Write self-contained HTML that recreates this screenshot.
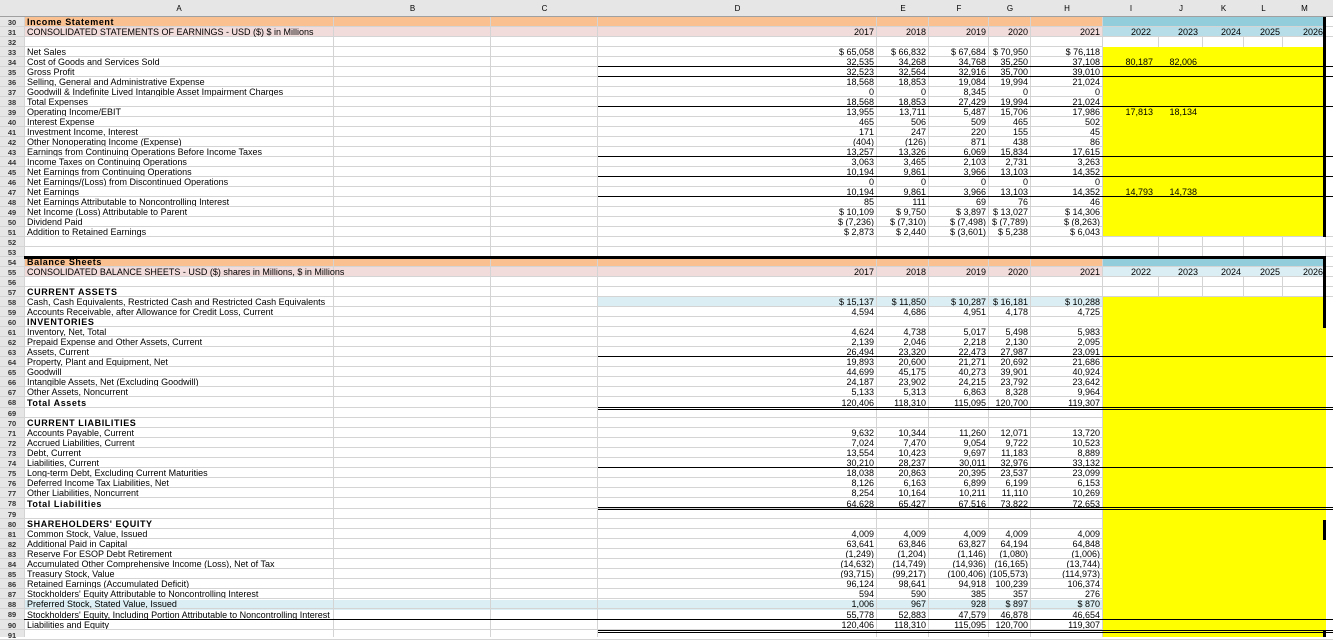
<!DOCTYPE html>
<html><head><meta charset="utf-8">
<style>
*{margin:0;padding:0;box-sizing:border-box}
body{width:1333px;height:637px;overflow:hidden;background:#fff;font-family:"Liberation Sans",Arial,sans-serif;font-size:9px;color:#000;position:relative}
.f{position:absolute}
.v{position:absolute;top:0;width:1px;height:637px;background:#d4d4d4}
.hd{position:absolute;top:0;left:0;width:1333px;height:17px;background:#e6e6e6;border-bottom:1px solid #a0a0a0}
.hd span{position:absolute;top:4px;font-size:8px;text-align:center}
.rows{position:absolute;top:17px;left:0;width:1333px}
.r{display:grid;grid-template-columns:24px 310px 157px 107px 279px 52px 60px 42px 72px 56px 44px 41px 39px 43px 7px;height:10px;line-height:9px;padding-top:1px;border-bottom:1px solid #d4d4d4;position:relative}
.r.t{height:11px;line-height:10px}
.r.y{border-bottom-color:transparent}
.r.y::after{content:"";position:absolute;left:0;bottom:-1px;width:1103px;height:1px;background:#d4d4d4}
.r>*{white-space:nowrap;text-align:right;padding-right:3px;font-style:normal;text-decoration:none;font-weight:normal;overflow:visible}
.r>i{text-align:center;font-size:7.5px;padding:0;font-weight:bold;color:#333}
.r>u{text-align:left;padding-left:3px}
.r>u.b{font-weight:900;letter-spacing:.6px}
.k{position:absolute;background:#000;height:1px;z-index:3}
</style></head><body>
<div class="f" style="left:0;top:0;width:24px;height:637px;background:#e6e6e6"></div>
<div class="f" style="left:24px;top:17px;width:1079px;height:10px;background:#fac090"></div>
<div class="f" style="left:1103px;top:17px;width:223px;height:10px;background:#92cddc"></div>
<div class="f" style="left:24px;top:27px;width:1079px;height:10px;background:#f2dcdb"></div>
<div class="f" style="left:1103px;top:27px;width:223px;height:10px;background:#b7dee8"></div>
<div class="f" style="left:1103px;top:47px;width:223px;height:190px;background:#ffff00"></div>
<div class="f" style="left:24px;top:257px;width:1079px;height:10px;background:#fac090"></div>
<div class="f" style="left:1103px;top:257px;width:223px;height:10px;background:#92cddc"></div>
<div class="f" style="left:24px;top:267px;width:1079px;height:10px;background:#f2dcdb"></div>
<div class="f" style="left:1103px;top:267px;width:223px;height:10px;background:#daeef3"></div>
<div class="f" style="left:598px;top:297px;width:505px;height:10px;background:#daeef3"></div>
<div class="f" style="left:24px;top:600px;width:1079px;height:10px;background:#daeef3"></div>
<div class="v" style="left:24px"></div><div class="v" style="left:333px"></div><div class="v" style="left:490px"></div><div class="v" style="left:597px"></div><div class="v" style="left:876px"></div><div class="v" style="left:928px"></div><div class="v" style="left:988px"></div><div class="v" style="left:1030px"></div><div class="v" style="left:1102px"></div><div class="v" style="left:1158px;top:37px;height:10px"></div><div class="v" style="left:1202px;top:37px;height:10px"></div><div class="v" style="left:1243px;top:37px;height:10px"></div><div class="v" style="left:1282px;top:37px;height:10px"></div><div class="v" style="left:1158px;top:237px;height:20px"></div><div class="v" style="left:1202px;top:237px;height:20px"></div><div class="v" style="left:1243px;top:237px;height:20px"></div><div class="v" style="left:1282px;top:237px;height:20px"></div><div class="v" style="left:1158px;top:277px;height:20px"></div><div class="v" style="left:1202px;top:277px;height:20px"></div><div class="v" style="left:1243px;top:277px;height:20px"></div><div class="v" style="left:1282px;top:277px;height:20px"></div><div class="v" style="left:1325px"></div>
<div class="f" style="left:1103px;top:297px;width:223px;height:340px;background:#ffff00"></div>
<div class="hd">
<span style="left:24px;width:310px">A</span><span style="left:334px;width:157px">B</span><span style="left:491px;width:107px">C</span><span style="left:598px;width:279px">D</span><span style="left:877px;width:52px">E</span><span style="left:929px;width:60px">F</span><span style="left:989px;width:42px">G</span><span style="left:1031px;width:72px">H</span><span style="left:1103px;width:56px">I</span><span style="left:1159px;width:44px">J</span><span style="left:1203px;width:41px">K</span><span style="left:1244px;width:39px">L</span><span style="left:1283px;width:43px">M</span>
</div>
<div class="rows">
<div class="r"><i>30</i><u class="b">Income Statement</u></div>
<div class="r"><i>31</i><u>CONSOLIDATED STATEMENTS OF EARNINGS - USD ($) $ in Millions</u><span></span><span></span><span>2017</span><span>2018</span><span>2019</span><span>2020</span><span>2021</span><span style="padding-right:8px">2022</span><span style="padding-right:5px">2023</span><span>2024</span><span>2025</span><span>2026</span></div>
<div class="r y"><i>32</i></div>
<div class="r y"><i>33</i><u>Net Sales</u><span></span><span></span><span>$ 65,058</span><span>$ 66,832</span><span>$ 67,684</span><span>$ 70,950</span><span>$ 76,118</span></div>
<div class="r y"><i>34</i><u>Cost of Goods and Services Sold</u><span></span><span></span><span>32,535</span><span>34,268</span><span>34,768</span><span>35,250</span><span>37,108</span><span style="padding-right:6px">80,187</span><span style="padding-right:6px">82,006</span></div>
<div class="r y"><i>35</i><u>Gross Profit</u><span></span><span></span><span>32,523</span><span>32,564</span><span>32,916</span><span>35,700</span><span>39,010</span></div>
<div class="r y"><i>36</i><u>Selling, General and Administrative Expense</u><span></span><span></span><span>18,568</span><span>18,853</span><span>19,084</span><span>19,994</span><span>21,024</span></div>
<div class="r y"><i>37</i><u>Goodwill &amp; Indefinite Lived Intangible Asset Impairment Charges</u><span></span><span></span><span>0</span><span>0</span><span>8,345</span><span>0</span><span>0</span></div>
<div class="r y"><i>38</i><u>Total Expenses</u><span></span><span></span><span>18,568</span><span>18,853</span><span>27,429</span><span>19,994</span><span>21,024</span></div>
<div class="r y"><i>39</i><u>Operating Income/EBIT</u><span></span><span></span><span>13,955</span><span>13,711</span><span>5,487</span><span>15,706</span><span>17,986</span><span style="padding-right:6px">17,813</span><span style="padding-right:6px">18,134</span></div>
<div class="r y"><i>40</i><u>Interest Expense</u><span></span><span></span><span>465</span><span>506</span><span>509</span><span>465</span><span>502</span></div>
<div class="r y"><i>41</i><u>Investment Income, Interest</u><span></span><span></span><span>171</span><span>247</span><span>220</span><span>155</span><span>45</span></div>
<div class="r y"><i>42</i><u>Other Nonoperating Income (Expense)</u><span></span><span></span><span>(404)</span><span>(126)</span><span>871</span><span>438</span><span>86</span></div>
<div class="r y"><i>43</i><u>Earnings from Continuing Operations Before Income Taxes</u><span></span><span></span><span>13,257</span><span>13,326</span><span>6,069</span><span>15,834</span><span>17,615</span></div>
<div class="r y"><i>44</i><u>Income Taxes on Continuing Operations</u><span></span><span></span><span>3,063</span><span>3,465</span><span>2,103</span><span>2,731</span><span>3,263</span></div>
<div class="r y"><i>45</i><u>Net Earnings from Continuing Operations</u><span></span><span></span><span>10,194</span><span>9,861</span><span>3,966</span><span>13,103</span><span>14,352</span></div>
<div class="r y"><i>46</i><u>Net Earnings/(Loss) from Discontinued Operations</u><span></span><span></span><span>0</span><span>0</span><span>0</span><span>0</span><span>0</span></div>
<div class="r y"><i>47</i><u>Net Earnings</u><span></span><span></span><span>10,194</span><span>9,861</span><span>3,966</span><span>13,103</span><span>14,352</span><span style="padding-right:6px">14,793</span><span style="padding-right:6px">14,738</span></div>
<div class="r y"><i>48</i><u>Net Earnings Attributable to Noncontrolling Interest</u><span></span><span></span><span>85</span><span>111</span><span>69</span><span>76</span><span>46</span></div>
<div class="r y"><i>49</i><u>Net Income (Loss) Attributable to Parent</u><span></span><span></span><span>$ 10,109</span><span>$ 9,750</span><span>$ 3,897</span><span>$ 13,027</span><span>$ 14,306</span></div>
<div class="r y"><i>50</i><u>Dividend Paid</u><span></span><span></span><span>$ (7,236)</span><span>$ (7,310)</span><span>$ (7,498)</span><span>$ (7,789)</span><span>$ (8,263)</span></div>
<div class="r"><i>51</i><u>Addition to Retained Earnings</u><span></span><span></span><span>$ 2,873</span><span>$ 2,440</span><span>$ (3,601)</span><span>$ 5,238</span><span>$ 6,043</span></div>
<div class="r"><i>52</i></div>
<div class="r"><i>53</i></div>
<div class="r"><i>54</i><u class="b">Balance Sheets</u></div>
<div class="r"><i>55</i><u>CONSOLIDATED BALANCE SHEETS - USD ($) shares in Millions, $ in Millions</u><span></span><span></span><span>2017</span><span>2018</span><span>2019</span><span>2020</span><span>2021</span><span style="padding-right:8px">2022</span><span style="padding-right:5px">2023</span><span>2024</span><span>2025</span><span>2026</span></div>
<div class="r"><i>56</i></div>
<div class="r"><i>57</i><u class="b">CURRENT ASSETS</u></div>
<div class="r y"><i>58</i><u>Cash, Cash Equivalents, Restricted Cash and Restricted Cash Equivalents</u><span></span><span></span><span>$ 15,137</span><span>$ 11,850</span><span>$ 10,287</span><span>$ 16,181</span><span>$ 10,288</span></div>
<div class="r y"><i>59</i><u>Accounts Receivable, after Allowance for Credit Loss, Current</u><span></span><span></span><span>4,594</span><span>4,686</span><span>4,951</span><span>4,178</span><span>4,725</span></div>
<div class="r y"><i>60</i><u class="b">INVENTORIES</u></div>
<div class="r y"><i>61</i><u>Inventory, Net, Total</u><span></span><span></span><span>4,624</span><span>4,738</span><span>5,017</span><span>5,498</span><span>5,983</span></div>
<div class="r y"><i>62</i><u>Prepaid Expense and Other Assets, Current</u><span></span><span></span><span>2,139</span><span>2,046</span><span>2,218</span><span>2,130</span><span>2,095</span></div>
<div class="r y"><i>63</i><u>Assets, Current</u><span></span><span></span><span>26,494</span><span>23,320</span><span>22,473</span><span>27,987</span><span>23,091</span></div>
<div class="r y"><i>64</i><u>Property, Plant and Equipment, Net</u><span></span><span></span><span>19,893</span><span>20,600</span><span>21,271</span><span>20,692</span><span>21,686</span></div>
<div class="r y"><i>65</i><u>Goodwill</u><span></span><span></span><span>44,699</span><span>45,175</span><span>40,273</span><span>39,901</span><span>40,924</span></div>
<div class="r y"><i>66</i><u>Intangible Assets, Net (Excluding Goodwill)</u><span></span><span></span><span>24,187</span><span>23,902</span><span>24,215</span><span>23,792</span><span>23,642</span></div>
<div class="r y"><i>67</i><u>Other Assets, Noncurrent</u><span></span><span></span><span>5,133</span><span>5,313</span><span>6,863</span><span>8,328</span><span>9,964</span></div>
<div class="r t y"><i>68</i><u class="b">Total Assets</u><span></span><span></span><span>120,406</span><span>118,310</span><span>115,095</span><span>120,700</span><span>119,307</span></div>
<div class="r y"><i>69</i></div>
<div class="r y"><i>70</i><u class="b">CURRENT LIABILITIES</u></div>
<div class="r y"><i>71</i><u>Accounts Payable, Current</u><span></span><span></span><span>9,632</span><span>10,344</span><span>11,260</span><span>12,071</span><span>13,720</span></div>
<div class="r y"><i>72</i><u>Accrued Liabilities, Current</u><span></span><span></span><span>7,024</span><span>7,470</span><span>9,054</span><span>9,722</span><span>10,523</span></div>
<div class="r y"><i>73</i><u>Debt, Current</u><span></span><span></span><span>13,554</span><span>10,423</span><span>9,697</span><span>11,183</span><span>8,889</span></div>
<div class="r y"><i>74</i><u>Liabilities, Current</u><span></span><span></span><span>30,210</span><span>28,237</span><span>30,011</span><span>32,976</span><span>33,132</span></div>
<div class="r y"><i>75</i><u>Long-term Debt, Excluding Current Maturities</u><span></span><span></span><span>18,038</span><span>20,863</span><span>20,395</span><span>23,537</span><span>23,099</span></div>
<div class="r y"><i>76</i><u>Deferred Income Tax Liabilities, Net</u><span></span><span></span><span>8,126</span><span>6,163</span><span>6,899</span><span>6,199</span><span>6,153</span></div>
<div class="r y"><i>77</i><u>Other Liabilities, Noncurrent</u><span></span><span></span><span>8,254</span><span>10,164</span><span>10,211</span><span>11,110</span><span>10,269</span></div>
<div class="r t y"><i>78</i><u class="b">Total Liabilities</u><span></span><span></span><span>64,628</span><span>65,427</span><span>67,516</span><span>73,822</span><span>72,653</span></div>
<div class="r y"><i>79</i></div>
<div class="r y"><i>80</i><u class="b">SHAREHOLDERS' EQUITY</u></div>
<div class="r y"><i>81</i><u>Common Stock, Value, Issued</u><span></span><span></span><span>4,009</span><span>4,009</span><span>4,009</span><span>4,009</span><span>4,009</span></div>
<div class="r y"><i>82</i><u>Additional Paid in Capital</u><span></span><span></span><span>63,641</span><span>63,846</span><span>63,827</span><span>64,194</span><span>64,848</span></div>
<div class="r y"><i>83</i><u>Reserve For ESOP Debt Retirement</u><span></span><span></span><span>(1,249)</span><span>(1,204)</span><span>(1,146)</span><span>(1,080)</span><span>(1,006)</span></div>
<div class="r y"><i>84</i><u>Accumulated Other Comprehensive Income (Loss), Net of Tax</u><span></span><span></span><span>(14,632)</span><span>(14,749)</span><span>(14,936)</span><span>(16,165)</span><span>(13,744)</span></div>
<div class="r y"><i>85</i><u>Treasury Stock, Value</u><span></span><span></span><span>(93,715)</span><span>(99,217)</span><span>(100,406)</span><span>(105,573)</span><span>(114,973)</span></div>
<div class="r y"><i>86</i><u>Retained Earnings (Accumulated Deficit)</u><span></span><span></span><span>96,124</span><span>98,641</span><span>94,918</span><span>100,239</span><span>106,374</span></div>
<div class="r y"><i>87</i><u>Stockholders' Equity Attributable to Noncontrolling Interest</u><span></span><span></span><span>594</span><span>590</span><span>385</span><span>357</span><span>276</span></div>
<div class="r y"><i>88</i><u>Preferred Stock, Stated Value, Issued</u><span></span><span></span><span>1,006</span><span>967</span><span>928</span><span>$ 897</span><span>$ 870</span></div>
<div class="r t y"><i>89</i><u>Stockholders' Equity, Including Portion Attributable to Noncontrolling Interest</u><span></span><span></span><span>55,778</span><span>52,883</span><span>47,579</span><span>46,878</span><span>46,654</span></div>
<div class="r y"><i>90</i><u>Liabilities and Equity</u><span></span><span></span><span>120,406</span><span>118,310</span><span>115,095</span><span>120,700</span><span>119,307</span></div>
<div class="r"><i>91</i></div>
</div>
<div class="k" style="left:598px;top:66px;width:735px"></div>
<div class="k" style="left:598px;top:76px;width:735px"></div>
<div class="k" style="left:598px;top:106px;width:735px"></div>
<div class="k" style="left:598px;top:156px;width:735px"></div>
<div class="k" style="left:598px;top:176px;width:735px"></div>
<div class="k" style="left:598px;top:196px;width:735px"></div>
<div class="k" style="left:24px;top:256px;width:1302px;height:3px"></div>
<div class="k" style="left:598px;top:356px;width:735px"></div>
<div class="k" style="left:598px;top:407px;width:735px"></div>
<div class="k" style="left:598px;top:409px;width:735px"></div>
<div class="k" style="left:598px;top:467px;width:735px"></div>
<div class="k" style="left:598px;top:507px;width:735px"></div>
<div class="k" style="left:598px;top:509px;width:735px"></div>
<div class="k" style="left:24px;top:619px;width:1309px"></div>
<div class="k" style="left:598px;top:630px;width:735px"></div>
<div class="k" style="left:598px;top:632px;width:735px"></div>
<div class="k" style="left:1323px;top:17px;width:3px;height:220px"></div>
<div class="k" style="left:1323px;top:256px;width:3px;height:72px"></div>
<div class="k" style="left:1323px;top:520px;width:3px;height:20px"></div>
<div class="k" style="left:1323px;top:630px;width:3px;height:7px"></div>
</body></html>
